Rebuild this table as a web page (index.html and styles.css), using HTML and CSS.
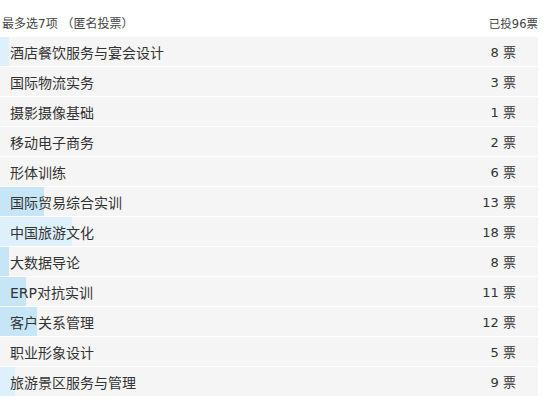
FILE: index.html
```html
<!DOCTYPE html>
<html lang="zh">
<head>
<meta charset="utf-8">
<link rel="stylesheet" href="styles.css">
</head>
<body>
<div class="poll">
  <div class="head">
    <span class="rule">最多选7项 （匿名投票）</span>
    <span class="total">已投96票</span>
  </div>
  <ul class="list">
    <li class="row"><span class="bar light" style="width:9px"></span><span class="name">酒店餐饮服务与宴会设计</span><span class="count">8 票</span></li>
    <li class="row"><span class="name">国际物流实务</span><span class="count">3 票</span></li>
    <li class="row"><span class="name">摄影摄像基础</span><span class="count">1 票</span></li>
    <li class="row"><span class="name">移动电子商务</span><span class="count">2 票</span></li>
    <li class="row"><span class="name">形体训练</span><span class="count">6 票</span></li>
    <li class="row"><span class="bar" style="width:44px"></span><span class="name">国际贸易综合实训</span><span class="count">13 票</span></li>
    <li class="row"><span class="bar light" style="width:72px"></span><span class="name">中国旅游文化</span><span class="count">18 票</span></li>
    <li class="row"><span class="bar" style="width:9px"></span><span class="name">大数据导论</span><span class="count">8 票</span></li>
    <li class="row"><span class="bar" style="width:26px"></span><span class="name">ERP对抗实训</span><span class="count">11 票</span></li>
    <li class="row"><span class="bar" style="width:37px"></span><span class="name">客户关系管理</span><span class="count">12 票</span></li>
    <li class="row"><span class="name">职业形象设计</span><span class="count">5 票</span></li>
    <li class="row"><span class="bar light" style="width:15px"></span><span class="name">旅游景区服务与管理</span><span class="count">9 票</span></li>
  </ul>
</div>
</body>
</html>
```
FILE: styles.css
```css
html, body {
  margin: 0;
  padding: 0;
  background: #fff;
}
body {
  font-family: "DejaVu Sans", "Noto Sans CJK SC", sans-serif;
  color: #333;
}
.poll {
  width: 538px;
}
.head {
  display: flex;
  justify-content: space-between;
  align-items: center;
  height: 37px;
  padding: 8px 0 0 2px;
  box-sizing: border-box;
  font-size: 12px;
  color: #444;
}
.total {
  font-size: 11.5px;
}
.list {
  list-style: none;
  margin: 0;
  padding: 0;
}
.row {
  position: relative;
  display: flex;
  align-items: center;
  justify-content: space-between;
  height: 29px;
  margin-bottom: 1px;
  background: #f5f5f5;
  padding: 0 22px 0 10px;
  font-size: 14px;
  color: #333;
}
.count {
  font-size: 13px;
}
.bar {
  position: absolute;
  left: 0;
  top: 0;
  bottom: 0;
  background: #c6e6f8;
}
.bar.light {
  background: #ddf0fc;
}
.name, .count {
  position: relative;
}
```
